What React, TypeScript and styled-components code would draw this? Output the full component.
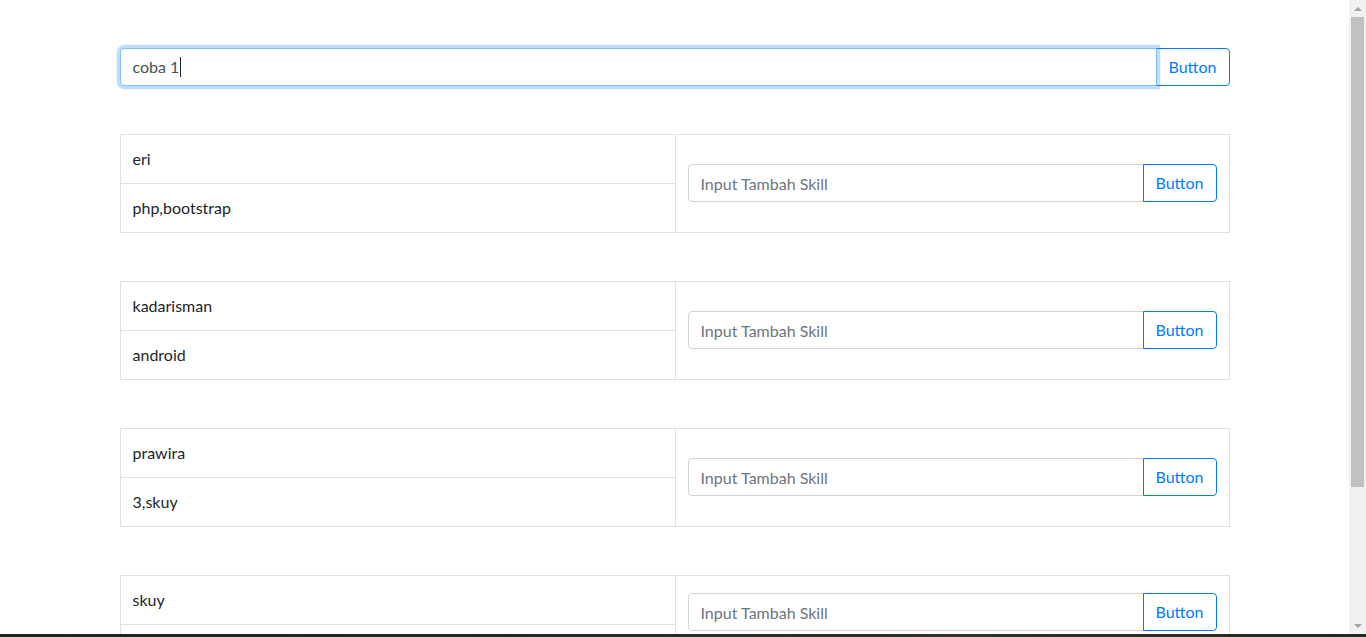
import React from "react";
import styled, { createGlobalStyle } from "styled-components";

const GlobalStyle = createGlobalStyle`
  html, body {
    margin: 0;
    padding: 0;
    overflow: hidden;
    background: #fff;
  }
  body {
    font-family: Lato, "Noto Sans", sans-serif;
    font-size: 16px;
    line-height: 1.5;
    color: #212529;
  }
  * { box-sizing: border-box; }
`;

const Screen = styled.div`
  display: flex;
  flex-direction: column;
  width: 1366px;
  height: 637px;
`;

const Viewport = styled.div`
  display: flex;
  flex: 1;
  min-height: 0;
`;

const Page = styled.div`
  flex: 1;
  overflow: hidden;
`;

const Container = styled.div`
  width: 1110px;
  margin: 0 auto;
  padding-top: 48px;
`;

const InputGroup = styled.div`
  display: flex;
  align-items: stretch;
  width: 100%;
`;

const Field = styled.input`
  flex: 1;
  min-width: 0;
  height: 38px;
  padding: 6px 12px;
  font: inherit;
  color: #495057;
  background: #fff;
  border: 1px solid #ced4da;
  border-radius: 4px 0 0 4px;
  outline: none;
  &::placeholder {
    color: #6c757d;
  }
`;

const FocusedField = styled.div`
  position: relative;
  z-index: 3;
  flex: 1;
  display: flex;
  align-items: center;
  height: 38px;
  padding: 6px 12px;
  color: #495057;
  background: #fff;
  border: 1px solid #80bdff;
  border-radius: 4px 0 0 4px;
  box-shadow: 0 0 0 3.2px rgba(0, 123, 255, 0.25);
`;

const Caret = styled.span`
  display: inline-block;
  width: 1px;
  height: 20px;
  margin-left: 1px;
  background: #212529;
`;

const OutlineButton = styled.button`
  height: 38px;
  margin-left: -1px;
  padding: 6px 12px;
  font: inherit;
  color: #007bff;
  background: transparent;
  border: 1px solid #007bff;
  border-radius: 0 4px 4px 0;
`;

const Block = styled.div`
  display: grid;
  grid-template-columns: 555px 1fr;
  grid-template-rows: auto auto;
  margin-top: 48px;
  border: 1px solid #dee2e6;
`;

const Cell = styled.div<{ $last?: boolean }>`
  min-height: 24px;
  padding: 12px;
  border-right: 1px solid #dee2e6;
  border-bottom: ${(p) => (p.$last ? "none" : "1px solid #dee2e6")};
`;

const SkillCell = styled.div`
  grid-column: 2;
  grid-row: 1 / 3;
  display: flex;
  align-items: center;
  padding: 0 12px 1px 12px;
`;

const Scrollbar = styled.div`
  display: flex;
  flex-direction: column;
  width: 17px;
  background: #f1f1f1;
`;

const Arrow = styled.div<{ $down?: boolean }>`
  height: 17px;
  display: flex;
  align-items: center;
  justify-content: center;
  &::after {
    content: "";
    border-left: 4px solid transparent;
    border-right: 4px solid transparent;
    ${(p) =>
      p.$down ? "border-top: 4px solid #a3a3a3;" : "border-bottom: 4px solid #a3a3a3;"}
  }
`;

const Thumb = styled.div`
  height: 470px;
  margin: 0 2px;
  background: #c1c1c1;
`;

const Track = styled.div`
  flex: 1;
`;

const Taskbar = styled.div`
  height: 3px;
  background: linear-gradient(90deg, #23201f 0%, #2a2622 40%, #3a2e25 70%, #2b241f 100%);
`;

type TPerson = { id: number; name: string; skills: string };

const people: TPerson[] = [
  { id: 1, name: "eri", skills: "php,bootstrap" },
  { id: 2, name: "kadarisman", skills: "android" },
  { id: 3, name: "prawira", skills: "3,skuy" },
  { id: 4, name: "skuy", skills: "" },
];

const person = ({ id, name, skills }: TPerson): JSX.Element => (
  <Block key={`person-${id}`}>
    <Cell>{name}</Cell>
    <Cell $last>{skills}</Cell>
    <SkillCell>
      <InputGroup>
        <Field placeholder="Input Tambah Skill" />
        <OutlineButton>Button</OutlineButton>
      </InputGroup>
    </SkillCell>
  </Block>
);

export default function App() {
  return (
    <Screen>
      <GlobalStyle />
      <Viewport>
        <Page>
          <Container>
            <InputGroup>
              <FocusedField>
                coba 1<Caret />
              </FocusedField>
              <OutlineButton>Button</OutlineButton>
            </InputGroup>
            {people.map(person)}
          </Container>
        </Page>
        <Scrollbar>
          <Arrow />
          <Thumb />
          <Track />
          <Arrow $down />
        </Scrollbar>
      </Viewport>
      <Taskbar />
    </Screen>
  );
}
